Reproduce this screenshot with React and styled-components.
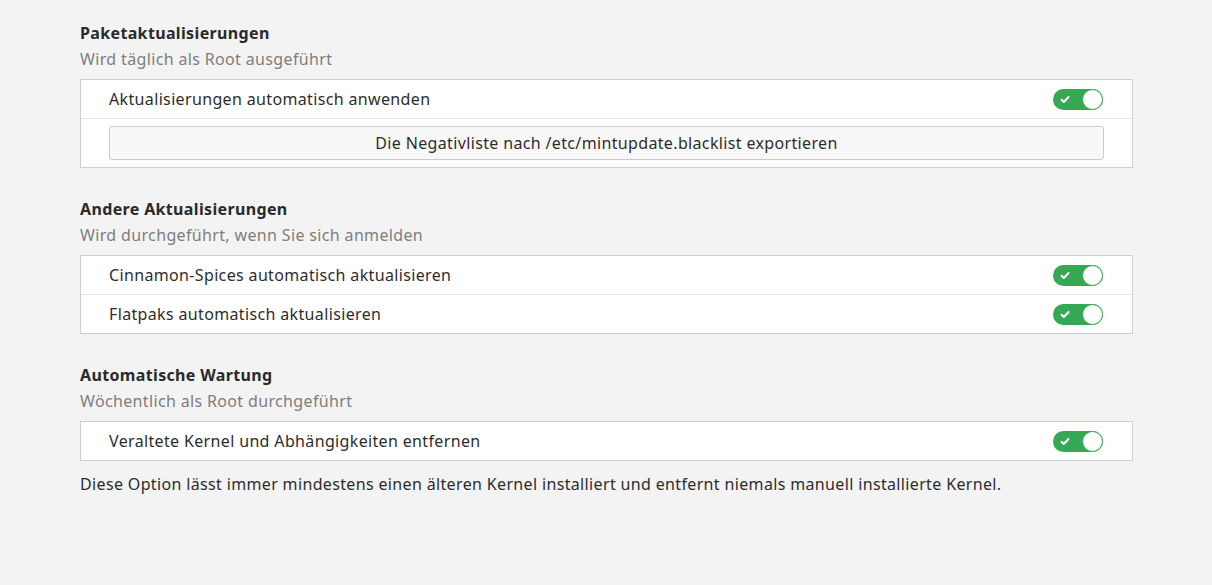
import styled, { createGlobalStyle } from "styled-components";

const GlobalStyle = createGlobalStyle`
  html, body {
    margin: 0;
    background: #f3f3f3;
  }
  body {
    font-family: "Noto Sans", "Open Sans", sans-serif;
    font-size: 16px;
    letter-spacing: 0.35px;
    color: #2d2d2d;
  }
`;

const Page = styled.div`
  padding: 22px 0 0 80px;
  width: 1053px;
`;

const Section = styled.section`
  margin-bottom: 30px;
`;

const Title = styled.h2`
  margin: 0;
  font-size: 16px;
  font-weight: 700;
  line-height: 22px;
  color: #2a2a2a;
`;

const Subtitle = styled.div`
  line-height: 22px;
  margin-top: 4px;
  margin-bottom: 9px;
  color: #7e7e7e;
`;

const Box = styled.div`
  background: #ffffff;
  border: 1px solid #cfcfcf;
`;

const Row = styled.div`
  display: flex;
  align-items: center;
  justify-content: space-between;
  height: ${(p) => (p.$tall ? "48px" : "38px")};
  padding: 0 28px;
  border-top: ${(p) => (p.$first ? "none" : "1px solid #e8e8e8")};
`;

const Label = styled.span`
  color: #2d2d2d;
`;

const Button = styled.button`
  flex: 1;
  height: 34px;
  background: #f8f8f8;
  border: 1px solid #cbcbcb;
  border-radius: 3px;
  font: inherit;
  letter-spacing: inherit;
  color: #2d2d2d;
  cursor: pointer;
`;

const Switch = styled.div`
  position: relative;
  width: 50px;
  height: 21px;
  border-radius: 11px;
  background: #35a854;
  margin-right: 1px;
  flex-shrink: 0;
`;

const Knob = styled.div`
  position: absolute;
  right: 0;
  top: 0;
  width: 19px;
  height: 19px;
  border-radius: 50%;
  background: #ffffff;
  border: 1px solid #35a854;
`;

const Check = styled.svg`
  position: absolute;
  left: 7px;
  top: 6px;
`;

const Note = styled.p`
  margin: 12px 0 0;
  line-height: 22px;
  color: #2d2d2d;
`;

function Toggle() {
  return (
    <Switch>
      <Check width="10" height="9" viewBox="0 0 10 9">
        <path d="M1.5 4.8 L3.8 7 L8.5 2" fill="none" stroke="#fff" strokeWidth="2" strokeLinecap="round" strokeLinejoin="round" />
      </Check>
      <Knob />
    </Switch>
  );
}

export default function App() {
  return (
    <>
      <GlobalStyle />
      <Page>
        <Section>
          <Title>Paketaktualisierungen</Title>
          <Subtitle>Wird täglich als Root ausgeführt</Subtitle>
          <Box>
            <Row $first>
              <Label>Aktualisierungen automatisch anwenden</Label>
              <Toggle />
            </Row>
            <Row $tall>
              <Button>Die Negativliste nach /etc/mintupdate.blacklist exportieren</Button>
            </Row>
          </Box>
        </Section>

        <Section>
          <Title>Andere Aktualisierungen</Title>
          <Subtitle>Wird durchgeführt, wenn Sie sich anmelden</Subtitle>
          <Box>
            <Row $first>
              <Label>Cinnamon-Spices automatisch aktualisieren</Label>
              <Toggle />
            </Row>
            <Row>
              <Label>Flatpaks automatisch aktualisieren</Label>
              <Toggle />
            </Row>
          </Box>
        </Section>

        <Section>
          <Title>Automatische Wartung</Title>
          <Subtitle>Wöchentlich als Root durchgeführt</Subtitle>
          <Box>
            <Row $first>
              <Label>Veraltete Kernel und Abhängigkeiten entfernen</Label>
              <Toggle />
            </Row>
          </Box>
          <Note>
            Diese Option lässt immer mindestens einen älteren Kernel installiert und entfernt niemals manuell installierte Kernel.
          </Note>
        </Section>
      </Page>
    </>
  );
}
